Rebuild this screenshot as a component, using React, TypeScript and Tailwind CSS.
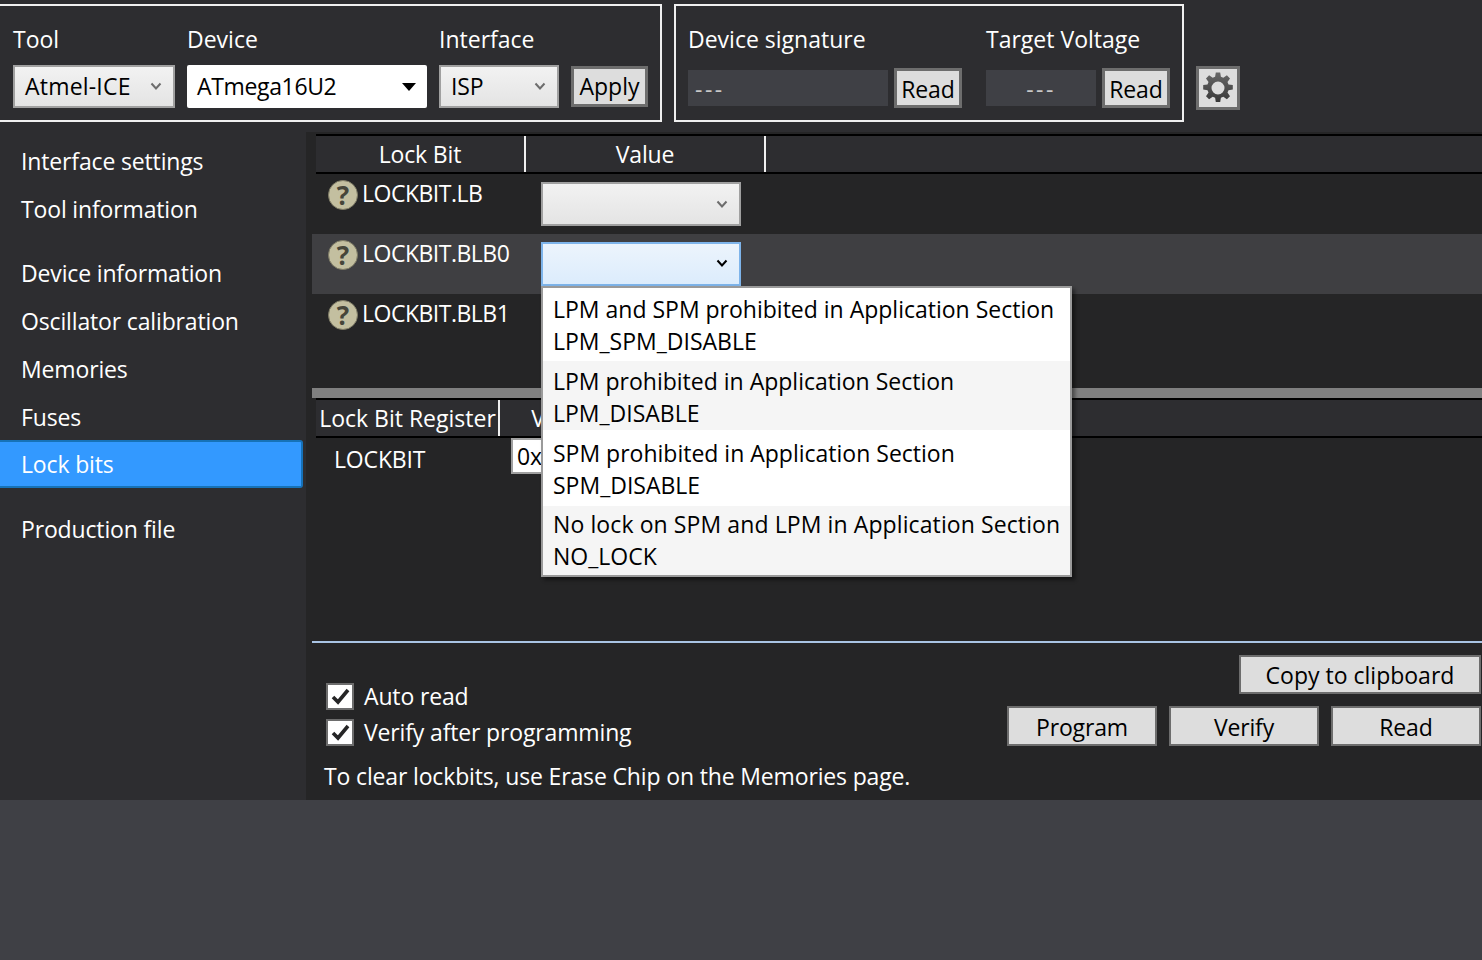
import React from 'react';

const Chevron = ({ color = '#6d6d6d' }: { color?: string }) => (
  <svg width="12" height="9" viewBox="0 0 12 9" fill="none">
    <path d="M1.5 1.5 L6 6.5 L10.5 1.5" stroke={color} strokeWidth="2" />
  </svg>
);

const Gear = () => (
  <svg width="34" height="34" viewBox="0 0 34 34">
    <defs>
      <linearGradient id="gearFill" x1="0" y1="0" x2="0" y2="1">
        <stop offset="0" stopColor="#686868" />
        <stop offset="1" stopColor="#383838" />
      </linearGradient>
    </defs>
    <path
      fill="url(#gearFill)"
      fillRule="evenodd"
      d="M14.8 1.5h4.4l.7 4.3 2.4 1 3.6-2.5 3.1 3.1-2.5 3.6 1 2.4 4.3.7v4.4l-4.3.7-1 2.4 2.5 3.6-3.1 3.1-3.6-2.5-2.4 1-.7 4.3h-4.4l-.7-4.3-2.4-1-3.6 2.5-3.1-3.1 2.5-3.6-1-2.4-4.3-.7v-4.4l4.3-.7 1-2.4-2.5-3.6 3.1-3.1 3.6 2.5 2.4-1zM17 10.5a6.5 6.5 0 1 0 0 13 6.5 6.5 0 0 0 0-13z"
    />
  </svg>
);

const Help = () => (
  <div className="flex h-[30px] w-[30px] shrink-0 items-center justify-center rounded-full border border-[#7f7c66] bg-[#c3bfa0] text-[26px] leading-none font-bold text-[#46463a]">
    ?
  </div>
);

const GrayButton = ({ label, className }: { label: string; className: string }) => (
  <div className={`flex items-center justify-center border-[3px] border-[#6d6d6d] bg-[#dddddd] text-black ${className}`}>
    {label}
  </div>
);

const WideButton = ({ label, className }: { label: string; className: string }) => (
  <div className={`flex items-center justify-center border-2 border-[#6d6d6d] bg-[#dddddd] pt-[2px] text-black ${className}`}>
    {label}
  </div>
);

const Select = ({ label, className }: { label: string; className: string }) => (
  <div className={`flex items-center justify-between border-2 border-[#a0a0a0] bg-gradient-to-b from-[#f2f2f2] to-[#e4e4e4] pl-[10px] pr-[11px] text-black ${className}`}>
    <span>{label}</span>
    <Chevron />
  </div>
);

const Field = ({ label, width, children }: { label: string; width: string; children: React.ReactNode }) => (
  <div className={`flex flex-col ${width}`}>
    <div className="h-[59px] pt-[19px] leading-[28px] tracking-normal text-white">{label}</div>
    {children}
  </div>
);

const navTop = ['Interface settings', 'Tool information'];
const navMid = ['Device information', 'Oscillator calibration', 'Memories', 'Fuses'];

const NavItem = ({ label, active }: { label: string; active?: boolean }) => (
  <div className={`flex h-[48px] items-center pl-[21px] text-white ${active ? 'mr-[3px] rounded-r-[3px] border-y-2 border-r-2 border-[#1672b8] bg-[#3399ff]' : ''}`}>
    {label}
  </div>
);

const LockRow = ({ label, focused, noSelect }: { label: string; focused?: boolean; noSelect?: boolean }) => (
  <div className={`flex h-[60px] pl-[16px] ${focused ? 'bg-[#3f3f42]' : ''}`}>
    <div className="flex w-[213px] gap-[4px] pt-[6px] text-white">
      <Help />
      <span className="mt-[-1px] leading-[28px] tracking-[-0.5px]">{label}</span>
    </div>
    {!noSelect &&
      (focused ? (
        <div className="mt-[8px] flex h-[44px] w-[200px] items-center justify-end border-2 border-[#7eb4ea] bg-gradient-to-b from-[#ecf4fc] to-[#dcecfc] pb-[2px] pr-[11px]">
          <Chevron color="#000000" />
        </div>
      ) : (
        <Select label="" className="mt-[8px] h-[44px] w-[200px]" />
      ))}
  </div>
);

const options = [
  ['LPM and SPM prohibited in Application Section', 'LPM_SPM_DISABLE', 'h-[73px] bg-white pt-[5px]', ''],
  ['LPM prohibited in Application Section', 'LPM_DISABLE', 'h-[69px] bg-[#f5f5f5] pt-[4px]', ''],
  ['SPM prohibited in Application Section', 'SPM_DISABLE', 'h-[76px] bg-white pt-[7px]', ''],
  ['No lock on SPM and LPM in Application Section', 'NO_LOCK', 'h-[69px] bg-[#f5f5f5] pt-[2px]', 'tracking-[0.1px]'],
];

const Check = ({ label }: { label: string }) => (
  <div className="flex h-[36px] items-center gap-[10px] text-white">
    <div className="flex h-[27px] w-[28px] items-center justify-center border-2 border-[#6d6d6d] bg-white">
      <svg width="19" height="17" viewBox="0 0 19 17" fill="none">
        <path d="M2 9 L7 14 L17 2" stroke="#252526" strokeWidth="3.6" />
      </svg>
    </div>
    {label}
  </div>
);

const App = () => {
  return (
    <div className="relative h-[960px] w-[1482px] overflow-hidden bg-[#3f4045] font-['Open_Sans',sans-serif] text-[23px] tracking-[-0.15px]">
      <div className="flex h-[800px] flex-col bg-[#2d2d30]">
        <div className="flex h-[132px] items-start gap-[12px] pt-[4px]">
          <div className="flex h-[118px] w-[662px] gap-[12px] border-2 border-l-0 border-[#f0f0f0] pl-[13px]">
            <Field label="Tool" width="w-[162px]">
              <Select label="Atmel-ICE" className="h-[43px] tracking-[0.2px]" />
            </Field>
            <Field label="Device" width="w-[240px]">
              <div className="flex h-[43px] items-center justify-between rounded-[2px] bg-white pl-[10px] pr-[11px] tracking-[-0.35px] text-black">
                <span>ATmega16U2</span>
                <div className="h-0 w-0 border-x-[7px] border-t-[8px] border-x-transparent border-t-black" />
              </div>
            </Field>
            <Field label="Interface" width="w-[120px]">
              <Select label="ISP" className="h-[43px]" />
            </Field>
            <div className="pt-[60px]">
              <GrayButton label="Apply" className="h-[41px] w-[77px] tracking-normal" />
            </div>
          </div>

          <div className="flex h-[118px] w-[510px] border-2 border-[#f0f0f0] pl-[12px]">
            <Field label="Device signature" width="w-[298px]">
              <div className="flex items-center gap-[6px] pt-[3px]">
                <div className="flex h-[36px] w-[200px] items-center bg-[#3f4045] pl-[7px] pt-[2px] tracking-[2.5px] text-[#c8c8c8]">---</div>
                <GrayButton label="Read" className="h-[40px] w-[68px] pt-[2px]" />
              </div>
            </Field>
            <Field label="Target Voltage" width="w-[184px]">
              <div className="flex items-center gap-[6px] pt-[3px]">
                <div className="flex h-[36px] w-[110px] items-center justify-center bg-[#3f4045] pt-[2px] tracking-[2.5px] text-[#c8c8c8]">---</div>
                <GrayButton label="Read" className="h-[40px] w-[68px] pt-[2px]" />
              </div>
            </Field>
          </div>

          <div className="mt-[62px] flex h-[44px] w-[44px] items-center justify-center border-[3px] border-[#6d6d6d] bg-[#dddddd]">
            <Gear />
          </div>
        </div>

        <div className="flex flex-1">
          <div className="flex w-[306px] flex-col pt-[5px]">
            {navTop.map((n) => (
              <NavItem key={n} label={n} />
            ))}
            <div className="h-[16px]" />
            {navMid.map((n) => (
              <NavItem key={n} label={n} />
            ))}
            <div className="mt-[-1px]">
              <NavItem label="Lock bits" active />
            </div>
            <div className="h-[17px]" />
            <NavItem label="Production file" />
          </div>

          <div className="flex flex-1 flex-col bg-[#252526] pl-[6px]">
            <div className="ml-[4px] mt-[2px] flex h-[40px] border-y-2 border-black bg-[#2d2d30] text-white">
              <div className="flex w-[210px] items-center justify-center border-r-2 border-[#f0f0f0]">Lock Bit</div>
              <div className="flex w-[240px] items-center justify-center border-r-2 border-[#f0f0f0]">Value</div>
            </div>
            <LockRow label="LOCKBIT.LB" />
            <LockRow label="LOCKBIT.BLB0" focused />
            <LockRow label="LOCKBIT.BLB1" noSelect />
            <div className="h-[34px]" />
            <div className="h-[10px] bg-[#808080]" />
            <div className="ml-[4px] flex h-[40px] border-y-2 border-black bg-[#2d2d30] text-white">
              <div className="flex w-[184px] items-center justify-center border-r-2 border-[#f0f0f0] pl-[1px] tracking-normal">Lock Bit Register</div>
              <div className="flex w-[120px] items-center justify-center border-r-2 border-[#f0f0f0] pl-[3px]">Value</div>
            </div>
            <div className="flex h-[203px] items-start text-white">
              <div className="flex h-[42px] w-[199px] items-center pl-[22px]">LOCKBIT</div>
              <div className="flex h-[36px] w-[60px] items-center border-2 border-[#a0a0a0] bg-white pl-[4px] text-black">0xFF</div>
            </div>
            <div className="h-[2px] bg-[#a9c4e4]" />
            <div className="flex flex-1 justify-between">
              <div className="flex flex-col pl-[12px] pt-[35px] text-white">
                <div className="pl-[2px]">
                  <Check label="Auto read" />
                  <Check label="Verify after programming" />
                </div>
                <div className="mt-[12px] leading-[28px]">To clear lockbits, use Erase Chip on the Memories page.</div>
              </div>
              <div className="flex flex-col items-end gap-[12px] pr-[1px] pt-[12px]">
                <WideButton label="Copy to clipboard" className="h-[39px] w-[242px] tracking-normal" />
                <div className="flex gap-[12px]">
                  <WideButton label="Program" className="h-[40px] w-[150px]" />
                  <WideButton label="Verify" className="h-[40px] w-[150px]" />
                  <WideButton label="Read" className="h-[40px] w-[150px]" />
                </div>
              </div>
            </div>
          </div>
        </div>
      </div>

      {/* open dropdown */}
      <div className="absolute left-[541px] top-[286px] w-[531px] border-2 border-[#9a9a9a] bg-white tracking-normal text-black shadow-[3px_3px_4px_rgba(0,0,0,0.45)]">
        {options.map(([a, b, cls, first]) => (
          <div key={b} className={`pl-[10px] leading-[32px] ${cls}`}>
            <div className={first}>{a}</div>
            <div>{b}</div>
          </div>
        ))}
      </div>
    </div>
  );
};

export default App;
